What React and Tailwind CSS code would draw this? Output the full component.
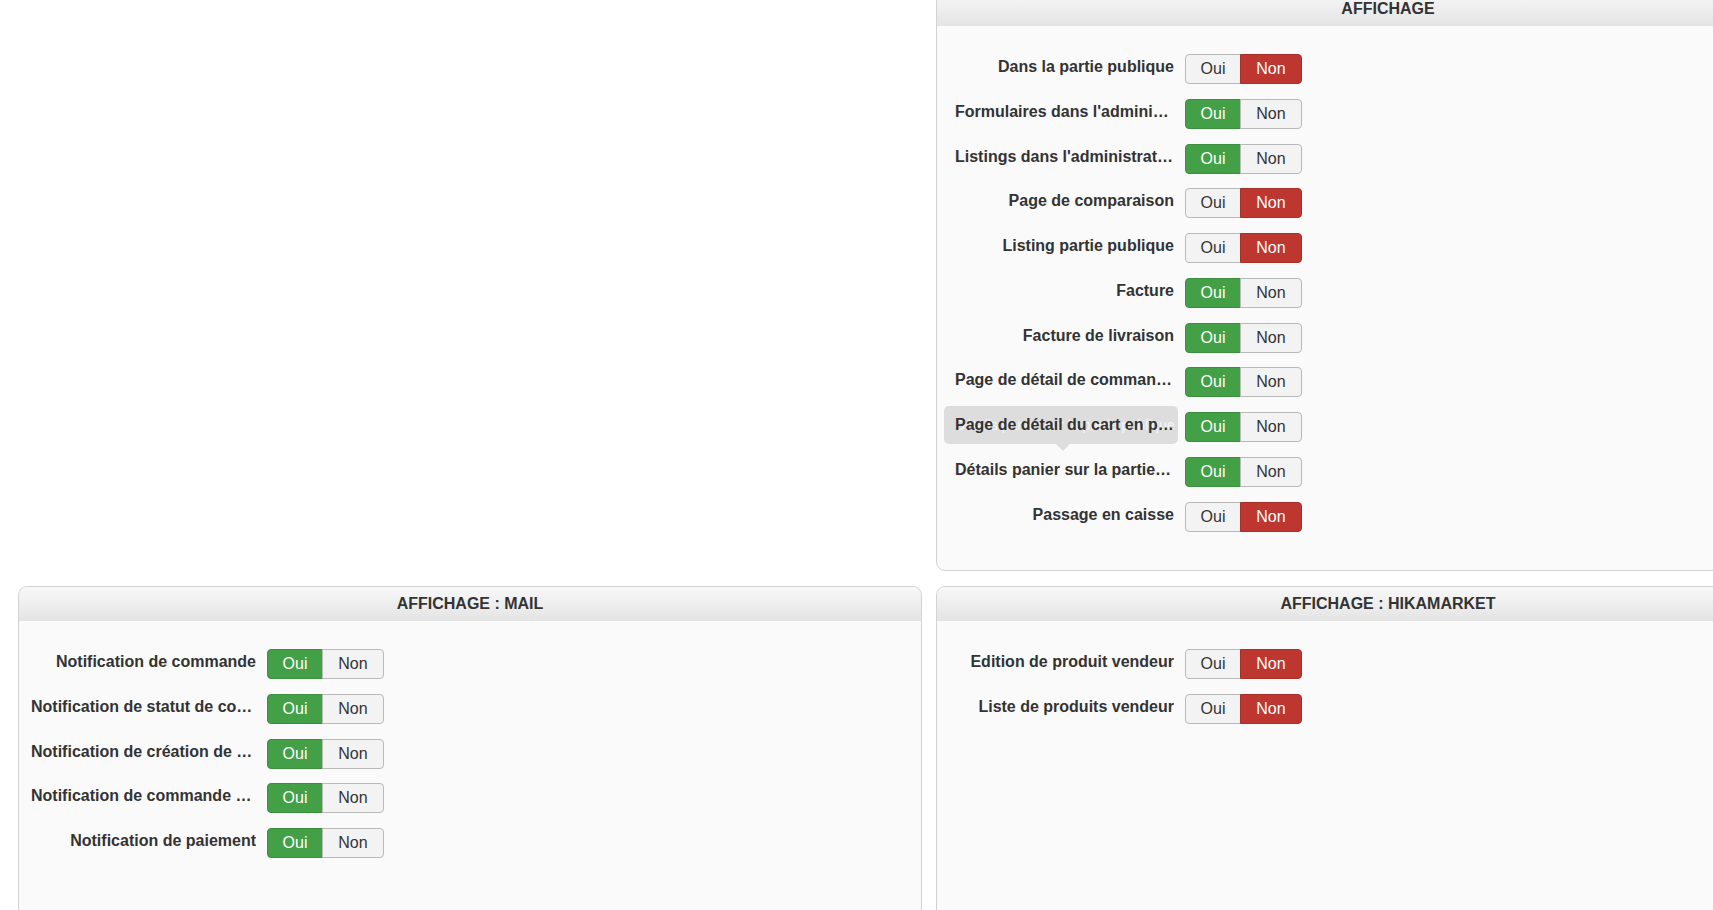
import React from "react";

const affichage = [
  { label: "Dans la partie publique", on: false },
  { label: "Formulaires dans l'administration", on: true },
  { label: "Listings dans l'administration", on: true },
  { label: "Page de comparaison", on: false },
  { label: "Listing partie publique", on: false },
  { label: "Facture", on: true },
  { label: "Facture de livraison", on: true },
  { label: "Page de détail de commande", on: true },
  { label: "Page de détail du cart en partie publique", on: true, tip: "Détails panier sur la partie publique" },
  { label: "Détails panier sur la partie publique", on: true },
  { label: "Passage en caisse", on: false },
];

const mail = [
  { label: "Notification de commande", on: true },
  { label: "Notification de statut de commande", on: true },
  { label: "Notification de création de compte", on: true },
  { label: "Notification de commande administrateur", on: true },
  { label: "Notification de paiement", on: true },
];

const hikamarket = [
  { label: "Edition de produit vendeur", on: false },
  { label: "Liste de produits vendeur", on: false },
];

function Toggle({ on }) {
  return (
    <div className="flex h-[30px] shrink-0 text-[16px]">
      <button
        className={`w-[56px] rounded-l-[4px] border flex items-center justify-center ${
          on ? "bg-[#43a047] border-[#3b8f3f] text-white" : "bg-[#f3f3f3] border-[#b9b9b9] text-[#333]"
        }`}
      >
        Oui
      </button>
      <button
        className={`-ml-px w-[62px] rounded-r-[4px] border flex items-center justify-center ${
          !on ? "bg-[#bd362f] border-[#a8302a] text-white" : "bg-[#f3f3f3] border-[#b9b9b9] text-[#333]"
        }`}
      >
        Non
      </button>
    </div>
  );
}

function Row({ label, on, tip, narrow }) {
  return (
    <div className={`flex items-start ${narrow ? "pl-[6px]" : ""}`}>
      <div className={`relative shrink-0 ${narrow ? "w-[219px]" : "w-[225px]"}`}>
        {tip && (
          <div className="absolute left-[-11px] right-[-4px] top-[-6px] h-[38px] rounded-[5px] bg-[#dddddd]">
            <span className="absolute left-[11px] top-[11px] text-[14px] leading-4 text-white/75 whitespace-nowrap">{tip}</span>
            <span className="absolute left-[112px] bottom-[-7px] h-0 w-0 border-x-[7px] border-t-[7px] border-x-transparent border-t-[#dddddd]" />
          </div>
        )}
        <div className="relative pt-[3px] text-right text-[16px] leading-5 font-bold text-[#333] truncate">{label}</div>
      </div>
      <div className="ml-[11px]">
        <Toggle on={on} />
      </div>
    </div>
  );
}

function Panel({ title, rows, narrow = false, className = "" }) {
  return (
    <div className={`rounded-[9px] border border-[#d3d3d3] bg-[#fafafa] ${className}`}>
      <div className="h-[34px] rounded-t-[9px] bg-gradient-to-b from-[#f8f8f8] to-[#e4e4e4] flex items-center justify-center text-[16px] font-bold text-[#333]">
        {title}
      </div>
      <div className="flex flex-col gap-[14.75px] pl-[12px] pt-[28px] pb-[38.5px]">
        {rows.map((r) => (
          <Row key={r.label} {...r} narrow={narrow} />
        ))}
      </div>
    </div>
  );
}

export default function App() {
  return (
    <div className="h-screen overflow-hidden bg-white font-['Liberation_Sans',Arial,sans-serif]">
      <div className="-mt-[9px] pl-[18px] grid grid-cols-[904px_904px] gap-x-[14px] gap-y-[15px]">
        <div />
        <Panel title="AFFICHAGE" rows={affichage} narrow />
        <Panel title="AFFICHAGE : MAIL" rows={mail} className="h-[420px]" />
        <Panel title="AFFICHAGE : HIKAMARKET" rows={hikamarket} className="h-[420px]" />
      </div>
    </div>
  );
}
